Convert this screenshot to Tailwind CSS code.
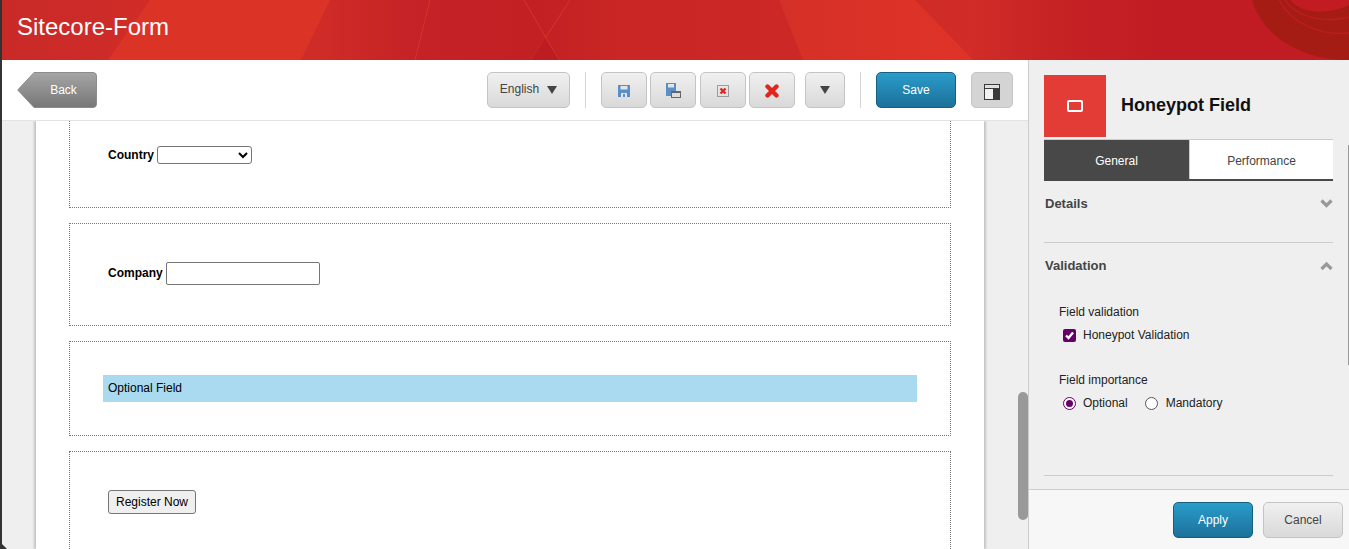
<!DOCTYPE html>
<html>
  <head>
    <meta charset="UTF-8" />
    <script src="https://cdn.jsdelivr.net/npm/@tailwindcss/browser@4"></script>
    <title>Sitecore-Form</title>
  </head>
  <body class="bg-[#efefef] font-['Liberation_Sans',Arial,sans-serif]">
    <div class="relative w-[1349px] h-[549px] overflow-hidden flex flex-col border-l-2 border-[#333333]">
      <!-- header -->
      <header class="relative h-[60px] shrink-0 flex items-center pl-[15px] pb-[6px] bg-[#c42025]">
        <svg class="absolute inset-0" width="1347" height="60" viewBox="2 0 1347 60">
          <defs>
            <linearGradient id="hdr" x1="0" y1="0" x2="1" y2="0">
              <stop offset="0" stop-color="#c92a28" />
              <stop offset="0.07" stop-color="#cd2b28" />
              <stop offset="0.14" stop-color="#d42e27" />
              <stop offset="0.24" stop-color="#cf2b27" />
              <stop offset="0.31" stop-color="#c42226" />
              <stop offset="0.4" stop-color="#c32024" />
              <stop offset="0.46" stop-color="#c92625" />
              <stop offset="0.54" stop-color="#cb2725" />
              <stop offset="0.62" stop-color="#cb2826" />
              <stop offset="0.72" stop-color="#d12c27" />
              <stop offset="0.78" stop-color="#c62325" />
              <stop offset="0.86" stop-color="#c11c23" />
              <stop offset="1" stop-color="#c21b23" />
            </linearGradient>
            <linearGradient id="slash" x1="0" y1="0" x2="1" y2="0">
              <stop offset="0" stop-color="#d53027" />
              <stop offset="1" stop-color="#e03328" />
            </linearGradient>
          </defs>
          <rect x="0" y="0" width="1349" height="60" fill="url(#hdr)" />
          <polygon points="108,60 150,0 330,0 301,60" fill="#dc3327" />
          <polygon points="779,0 803,60 973,60 915,0" fill="url(#slash)" />
          <path d="M415,60 L430,0 M524,0 L559,60 M570,0 L531,60" stroke="#d2352c" stroke-width="1" fill="none" />
          <polygon points="531,60 559,60 545,38" fill="#bc1c22" />
          <path d="M1252,0 C1262,35 1300,60 1349,60 L1349,0 Z" fill="#a51c14" />
          <path d="M1279,0 C1292,24 1320,36 1349,33" stroke="#bd1c20" stroke-width="1.5" fill="none" />
          <path d="M1285,0 C1296,17 1325,24 1349,17" stroke="#bd1c20" stroke-width="1.5" fill="none" />
          <path d="M1290,0 C1302,14 1328,15 1349,5 L1349,0 Z" fill="#c21c22" />
        </svg>
        <h1 class="relative text-[24px] leading-none text-white">Sitecore-Form</h1>
      </header>

      <div class="flex flex-1 min-h-0">
        <!-- main column -->
        <main class="relative w-[1026px] flex flex-col min-h-0">
          <div class="h-[61px] shrink-0 bg-white border-b border-[#e3e3e3] flex items-start pt-[12px] pl-[15px] text-[12px]">
            <button class="relative w-[80px] h-[36px] text-white flex items-center justify-center">
              <svg class="absolute inset-0" width="80" height="36" viewBox="0 0 80 36">
                <defs>
                  <linearGradient id="back" x1="0" y1="0" x2="0" y2="1">
                    <stop offset="0" stop-color="#a5a5a5" />
                    <stop offset="1" stop-color="#777777" />
                  </linearGradient>
                </defs>
                <path d="M17,0.5 H76 Q79.5,0.5 79.5,4 V32 Q79.5,35.5 76,35.5 H17 L0.7,18 Z" fill="url(#back)" stroke="#8c8c8c" />
              </svg>
              <span class="relative pl-[13px]">Back</span>
            </button>

            <button class="ml-[390px] w-[83px] h-[36px] rounded-[5px] border border-[#c4c4c4] bg-gradient-to-b from-[#f0f0f0] to-[#d9d9d9] text-[#444444] flex items-center justify-center gap-[8px]">
              <span class="-mt-[2px]">English</span>
              <svg width="10" height="8" viewBox="0 0 10 8" class="-mt-[1px]"><path d="M0,0 H10 L5,8 Z" fill="#444444" /></svg>
            </button>
            <div class="ml-[15px] w-px h-[36px] bg-[#d4d4d4]"></div>

            <button class="ml-[15px] w-[46px] h-[36px] rounded-[5px] border border-[#c4c4c4] bg-gradient-to-b from-[#f0f0f0] to-[#d9d9d9] flex items-center justify-center">
              <svg width="12" height="12" viewBox="0 0 12 12" class="mt-[2px]">
                <path d="M0,0 H12 V12 H0 Z" fill="#5a8ec6" />
                <rect x="2.5" y="1" width="7" height="3.5" fill="#e4e4e4" />
                <rect x="3" y="8" width="6" height="4" fill="#e4e4e4" />
                <rect x="5" y="9" width="2" height="3" fill="#5a8ec6" />
              </svg>
            </button>
            <button class="ml-[3px] w-[46px] h-[36px] rounded-[5px] border border-[#c4c4c4] bg-gradient-to-b from-[#f0f0f0] to-[#d9d9d9] flex items-center justify-center">
              <svg width="15" height="15" viewBox="0 0 15 15">
                <path d="M0,0 H10 V8 H6 V13 H0 Z" fill="#5a8ec6" />
                <rect x="2" y="1" width="6" height="3.5" fill="#e4e4e4" />
                <rect x="5.5" y="8.5" width="9" height="6" fill="#dcdcdc" stroke="#666666" />
                <rect x="5" y="8" width="10" height="2" fill="#666666" />
              </svg>
            </button>
            <button class="ml-[4px] w-[46px] h-[36px] rounded-[5px] border border-[#c4c4c4] bg-gradient-to-b from-[#f0f0f0] to-[#d9d9d9] flex items-center justify-center">
              <svg width="12" height="12" viewBox="0 0 12 12" class="mt-[2px]">
                <rect x="0.5" y="0.5" width="11" height="11" fill="none" stroke="#555555" stroke-dasharray="1 1" />
                <path d="M3.5,3.5 L8.5,8.5 M8.5,3.5 L3.5,8.5" stroke="#e1261c" stroke-width="2.4" />
              </svg>
            </button>
            <button class="ml-[3px] w-[46px] h-[36px] rounded-[5px] border border-[#c4c4c4] bg-gradient-to-b from-[#f0f0f0] to-[#d9d9d9] flex items-center justify-center">
              <svg width="14" height="14" viewBox="0 0 14 14" class="mt-[2px]">
                <path d="M2.5,2.5 L11.5,11.5 M11.5,2.5 L2.5,11.5" stroke="#e1261c" stroke-width="4.4" stroke-linecap="round" />
              </svg>
            </button>
            <button class="ml-[10px] w-[40px] h-[36px] rounded-[5px] border border-[#c4c4c4] bg-gradient-to-b from-[#f0f0f0] to-[#d9d9d9] flex items-center justify-center">
              <svg width="10" height="8" viewBox="0 0 10 8" class="-mt-[1px]"><path d="M0,0 H10 L5,8 Z" fill="#444444" /></svg>
            </button>
            <div class="ml-[15px] w-px h-[36px] bg-[#d4d4d4]"></div>

            <button class="ml-[15px] w-[80px] h-[36px] rounded-[5px] border border-[#15607f] bg-gradient-to-b from-[#2a9ccb] to-[#1c7199] text-white">Save</button>
            <button class="ml-[15px] w-[42px] h-[36px] rounded-[5px] border border-[#c4c4c4] bg-[#d4d4d4] flex items-center justify-center">
              <svg width="16" height="16" viewBox="0 0 16 16" class="mt-[4px]">
                <rect x="0.5" y="0.5" width="15" height="15" fill="#f2f2f2" stroke="#3a3a3a" />
                <rect x="0" y="0" width="16" height="5" fill="#3a3a3a" />
                <rect x="1" y="1" width="14" height="3" fill="#e0e0e0" />
                <rect x="9" y="4" width="7" height="12" fill="#3a3a3a" />
              </svg>
            </button>
          </div>

          <!-- form canvas -->
          <div class="flex-1 min-h-0 bg-[#efefef] pl-[34px] pr-[44px] overflow-hidden">
            <div class="h-full bg-white shadow-[-2px_0_2px_rgba(0,0,0,0.18),2px_0_2px_rgba(0,0,0,0.18)] pl-[33px] pr-[33px] text-[12px] text-black">
              <div class="h-[87px] border-x border-b border-dotted border-[#777777] pl-[38px] pt-[25px] flex items-start gap-[3px]">
                <label class="font-bold leading-[18px]">Country</label>
                <select class="appearance-auto w-[95px] h-[18px] border border-[#767676] rounded-[3px] bg-white text-[12px]"></select>
              </div>
              <div class="mt-[15px] h-[103px] border border-dotted border-[#777777] pl-[38px] pt-[38px] flex items-start gap-[3px]">
                <label class="font-bold leading-[23px]">Company</label>
                <input type="text" class="w-[154px] h-[23px] border border-[#767676] rounded-[2px] bg-white" />
              </div>
              <div class="mt-[15px] h-[95px] border border-dotted border-[#777777] pl-[33px] pr-[33px] pt-[33px]">
                <div class="h-[27px] bg-[#aadaef] pl-[5px] leading-[26px]">Optional Field</div>
              </div>
              <div class="mt-[15px] h-[120px] border-x border-t border-dotted border-[#777777] pl-[38px] pt-[38px]">
                <button class="w-[88px] h-[24px] border border-[#767676] rounded-[3px] bg-[#efefef] text-[12px]">Register Now</button>
              </div>
            </div>
          </div>
          <div class="absolute right-0 top-[332px] w-[10px] h-[128px] rounded-full bg-[#999999]"></div>
        </main>

        <!-- right panel -->
        <aside class="relative w-[321px] border-l border-[#cccccc] bg-[#efefef] flex flex-col min-h-0 text-[12px]">
          <div class="flex-1 min-h-0 pl-[15px] pr-[16px] pt-[15px]">
            <div class="flex items-center h-[62px]">
              <div class="w-[62px] h-[62px] bg-[#e33c36] flex items-center justify-center">
                <div class="w-[16px] h-[12px] border-2 border-white rounded-[2px]"></div>
              </div>
              <h2 class="ml-[15px] text-[18px] font-bold text-[#111111] -mt-[1px]">Honeypot Field</h2>
            </div>
            <div class="mt-[2px] flex h-[42px] border-t border-[#cccccc] border-b-2 border-b-[#484848]">
              <div class="w-[145px] bg-[#484848] text-white flex items-center justify-center pt-[2px]">General</div>
              <div class="flex-1 bg-white border-l border-[#cccccc] text-[#444444] flex items-center justify-center pt-[2px]">Performance</div>
            </div>

            <div class="h-[62px] border-b border-[#cccccc] flex items-start justify-between pt-[15px] pl-[1px]">
              <span class="text-[13px] leading-[16px] font-bold text-[#444444]">Details</span>
              <svg width="13" height="10" viewBox="0 0 13 10" class="mt-[3px]"><path d="M1.5,1.5 L6.5,6.5 L11.5,1.5" fill="none" stroke="#999999" stroke-width="3.2" /></svg>
            </div>
            <div class="h-[233px] border-b border-[#cccccc] pt-[15px]">
              <div class="flex items-start justify-between pl-[1px]">
                <span class="text-[13px] leading-[16px] font-bold text-[#444444]">Validation</span>
                <svg width="13" height="10" viewBox="0 0 13 10" class="mt-[3px]"><path d="M1.5,8 L6.5,3 L11.5,8" fill="none" stroke="#999999" stroke-width="3.2" /></svg>
              </div>
              <div class="pl-[15px] pt-[31px] text-[#222222]">
                <div class="leading-[14px]">Field validation</div>
                <div class="mt-[9px] flex items-center pl-[4px] h-[14px]">
                  <span class="w-[13px] h-[13px] rounded-[2px] bg-[#660066] flex items-center justify-center">
                    <svg width="9" height="9" viewBox="0 0 9 9"><path d="M1,4.5 L3.5,7 L8,1.5" fill="none" stroke="white" stroke-width="2.4" /></svg>
                  </span>
                  <span class="ml-[7px]">Honeypot Validation</span>
                </div>
                <div class="mt-[31px] leading-[14px]">Field importance</div>
                <div class="mt-[9px] flex items-center pl-[4px] h-[14px]">
                  <span class="w-[13px] h-[13px] rounded-full border-[1.5px] border-[#660066] bg-white flex items-center justify-center">
                    <span class="w-[7px] h-[7px] rounded-full bg-[#660066]"></span>
                  </span>
                  <span class="ml-[7px]">Optional</span>
                  <span class="ml-[17px] w-[13px] h-[13px] rounded-full border border-[#555555] bg-white"></span>
                  <span class="ml-[8px]">Mandatory</span>
                </div>
              </div>
            </div>
          </div>
          <div class="h-[60px] shrink-0 border-t border-[#cccccc] bg-[#f7f7f7] flex items-start justify-end gap-[10px] pt-[12px] pr-[6px]">
            <button class="w-[80px] h-[36px] rounded-[5px] border border-[#15607f] bg-gradient-to-b from-[#2a9ccb] to-[#1c7199] text-white">Apply</button>
            <button class="w-[80px] h-[36px] rounded-[5px] border border-[#c4c4c4] bg-gradient-to-b from-[#f0f0f0] to-[#d9d9d9] text-[#444444]">Cancel</button>
          </div>
          <div class="absolute right-0 top-[85px] w-px h-[220px] bg-[#9a9a9a]"></div>
        </aside>
      </div>
      <svg class="absolute left-0 bottom-0" width="5" height="5" viewBox="0 0 5 5"><path d="M0,0 L5,5 H0 Z" fill="#333333" /></svg>
    </div>
  </body>
</html>
